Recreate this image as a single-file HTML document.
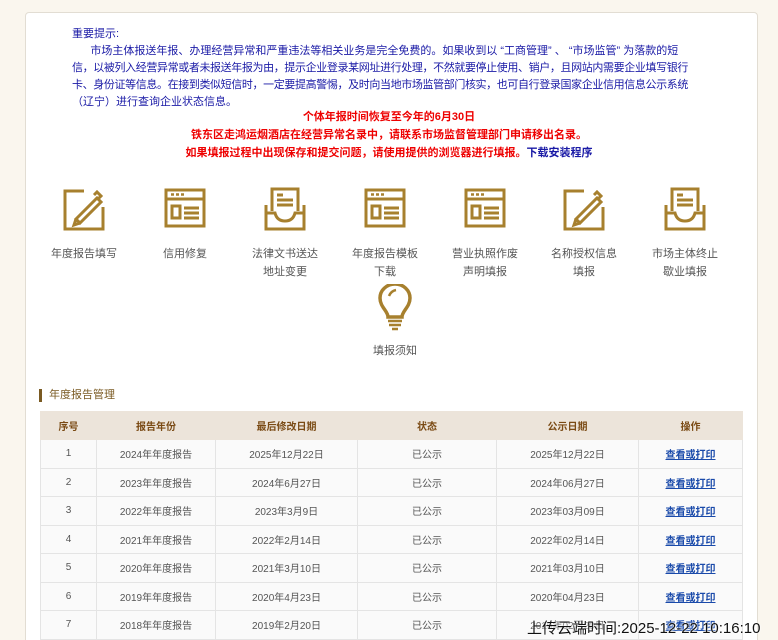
<!DOCTYPE html>
<html><head><meta charset="utf-8">
<style>
*{margin:0;padding:0;box-sizing:border-box}
html,body{width:778px;height:640px;overflow:hidden}
body{background:#faf6ee;font-family:"Liberation Sans","Noto Sans CJK SC",sans-serif;position:relative}
.card{position:absolute;left:25px;top:12px;width:733px;height:628px;background:#fff;border:1px solid #e2ddd3;border-bottom:none;border-radius:4px 4px 0 0}
.notice{position:absolute;left:72px;top:26px;width:640px;font-size:11px;line-height:17px;color:#1a1aa6;white-space:nowrap}
.notice .t{letter-spacing:-0.38px}
.red{position:absolute;left:0;width:778px;text-align:center;color:#e00;font-size:11px;font-weight:bold;line-height:18px}
.red a{color:#1a1aa6;text-decoration:none}
.ic{position:absolute;width:100px;text-align:center;font-size:11px;color:#555;line-height:18px}
.ic svg{display:block;margin:0 auto 14px}
.title{position:absolute;left:39px;top:389px;font-size:11px;color:#7a5a22;border-left:3px solid #7a5a22;padding-left:7px;line-height:13px}
table{position:absolute;left:40px;top:411px;width:703px;border-collapse:collapse;font-size:10px;color:#555;text-align:center}
th{background:#ece4da;color:#7a4a14;height:28px;font-weight:bold;border:1px solid #ece4da}
td{height:28.5px;border:1px solid #e4e4e4;background:#fafafa;vertical-align:middle}
td a{color:#1a4aaa;text-decoration:underline;font-weight:bold}
.wm{position:absolute;left:527px;top:617px;font-size:15px;color:#111;text-shadow:0 0 2px #fff,0 0 2px #fff;white-space:nowrap}
</style></head><body>
<div class="card"></div>
<div class="notice">
重要提示:<br>
&nbsp;&nbsp;&nbsp;&nbsp;&nbsp;&nbsp;市场主体报送年报、办理经营异常和严重违法等相关业务是完全免费的。如果收到以 “工商管理” 、 “市场监管” 为落款的短<br>
<span class="t">信，以被列入经营异常或者未报送年报为由，提示企业登录某网址进行处理，不然就要停止使用、销户，且网站内需要企业填写银行</span><br>
<span class="t">卡、身份证等信息。在接到类似短信时，一定要提高警惕，及时向当地市场监管部门核实，也可自行登录国家企业信用信息公示系统</span><br>
（辽宁）进行查询企业状态信息。
</div>
<div class="red" style="top:108px">个体年报时间恢复至今年的6月30日</div>
<div class="red" style="top:126px">铁东区走鸿运烟酒店在经营异常名录中，请联系市场监督管理部门申请移出名录。</div>
<div class="red" style="top:144px">如果填报过程中出现保存和提交问题，请使用提供的浏览器进行填报。<a>下载安装程序</a></div>

<svg width="0" height="0" style="position:absolute">
<defs>
<g id="pen" fill="none" stroke="#a7802e" stroke-width="3"><path d="M22 6H3V44H41V22"/><path d="M14 34L35 13L39 17L18 38Z M14 34L12 40L18 38 M32 10l3-3l4 4l-3 3"/></g>
<g id="win" fill="none" stroke="#a7802e" stroke-width="3"><rect x="3" y="5" width="38" height="36"/><path d="M3 14H41"/><path d="M8 9.5h3M13 9.5h3M18 9.5h3" stroke-width="2.5"/><rect x="9" y="21" width="8" height="12"/><path d="M21 23H36M21 28H36M21 33H36"/></g>
<g id="tray" fill="none" stroke="#a7802e" stroke-width="3"><path d="M3 20V44H41V20"/><path d="M3 28H12Q14 36 22 36Q30 36 32 28H41"/><path d="M9 26V4H35V26"/><path d="M14 10H20M14 15H30M14 20H30"/></g>
</defs></svg>

<div class="ic" style="left:34px;top:185px"><svg width="44" height="46"><use href="#pen"/></svg>年度报告填写</div>
<div class="ic" style="left:135px;top:185px"><svg width="44" height="46"><use href="#win"/></svg>信用修复</div>
<div class="ic" style="left:235px;top:185px"><svg width="44" height="46"><use href="#tray"/></svg>法律文书送达<br>地址变更</div>
<div class="ic" style="left:335px;top:185px"><svg width="44" height="46"><use href="#win"/></svg>年度报告模板<br>下载</div>
<div class="ic" style="left:435px;top:185px"><svg width="44" height="46"><use href="#win"/></svg>营业执照作废<br>声明填报</div>
<div class="ic" style="left:534px;top:185px"><svg width="44" height="46"><use href="#pen"/></svg>名称授权信息<br>填报</div>
<div class="ic" style="left:635px;top:185px"><svg width="44" height="46"><use href="#tray"/></svg>市场主体终止<br>歇业填报</div>
<div class="ic" style="left:345px;top:284px"><svg width="44" height="48" fill="none" stroke="#a7802e" stroke-width="3.5" style="margin-bottom:10px"><path d="M15 33C15 27 7 23 7 14A15 14 0 0 1 37 14C37 23 29 27 29 33Z"/><path d="M16 12Q18 7 23 6" stroke-width="2.5"/><path d="M15 37H29M16 41H28M19 45H25" stroke-width="2.5"/></svg>填报须知</div>

<div class="title">年度报告管理</div>
<table>
<tr><th style="width:56px">序号</th><th style="width:119px">报告年份</th><th style="width:142px">最后修改日期</th><th style="width:139px">状态</th><th style="width:142px">公示日期</th><th>操作</th></tr>
<tr><td>1</td><td>2024年年度报告</td><td>2025年12月22日</td><td>已公示</td><td>2025年12月22日</td><td><a>查看或打印</a></td></tr>
<tr><td>2</td><td>2023年年度报告</td><td>2024年6月27日</td><td>已公示</td><td>2024年06月27日</td><td><a>查看或打印</a></td></tr>
<tr><td>3</td><td>2022年年度报告</td><td>2023年3月9日</td><td>已公示</td><td>2023年03月09日</td><td><a>查看或打印</a></td></tr>
<tr><td>4</td><td>2021年年度报告</td><td>2022年2月14日</td><td>已公示</td><td>2022年02月14日</td><td><a>查看或打印</a></td></tr>
<tr><td>5</td><td>2020年年度报告</td><td>2021年3月10日</td><td>已公示</td><td>2021年03月10日</td><td><a>查看或打印</a></td></tr>
<tr><td>6</td><td>2019年年度报告</td><td>2020年4月23日</td><td>已公示</td><td>2020年04月23日</td><td><a>查看或打印</a></td></tr>
<tr><td>7</td><td>2018年年度报告</td><td>2019年2月20日</td><td>已公示</td><td>2019年02月20日</td><td><a>查看或打印</a></td></tr>
</table>
<div class="wm">上传云端时间:2025-12-22 10:16:10</div>
</body></html>
